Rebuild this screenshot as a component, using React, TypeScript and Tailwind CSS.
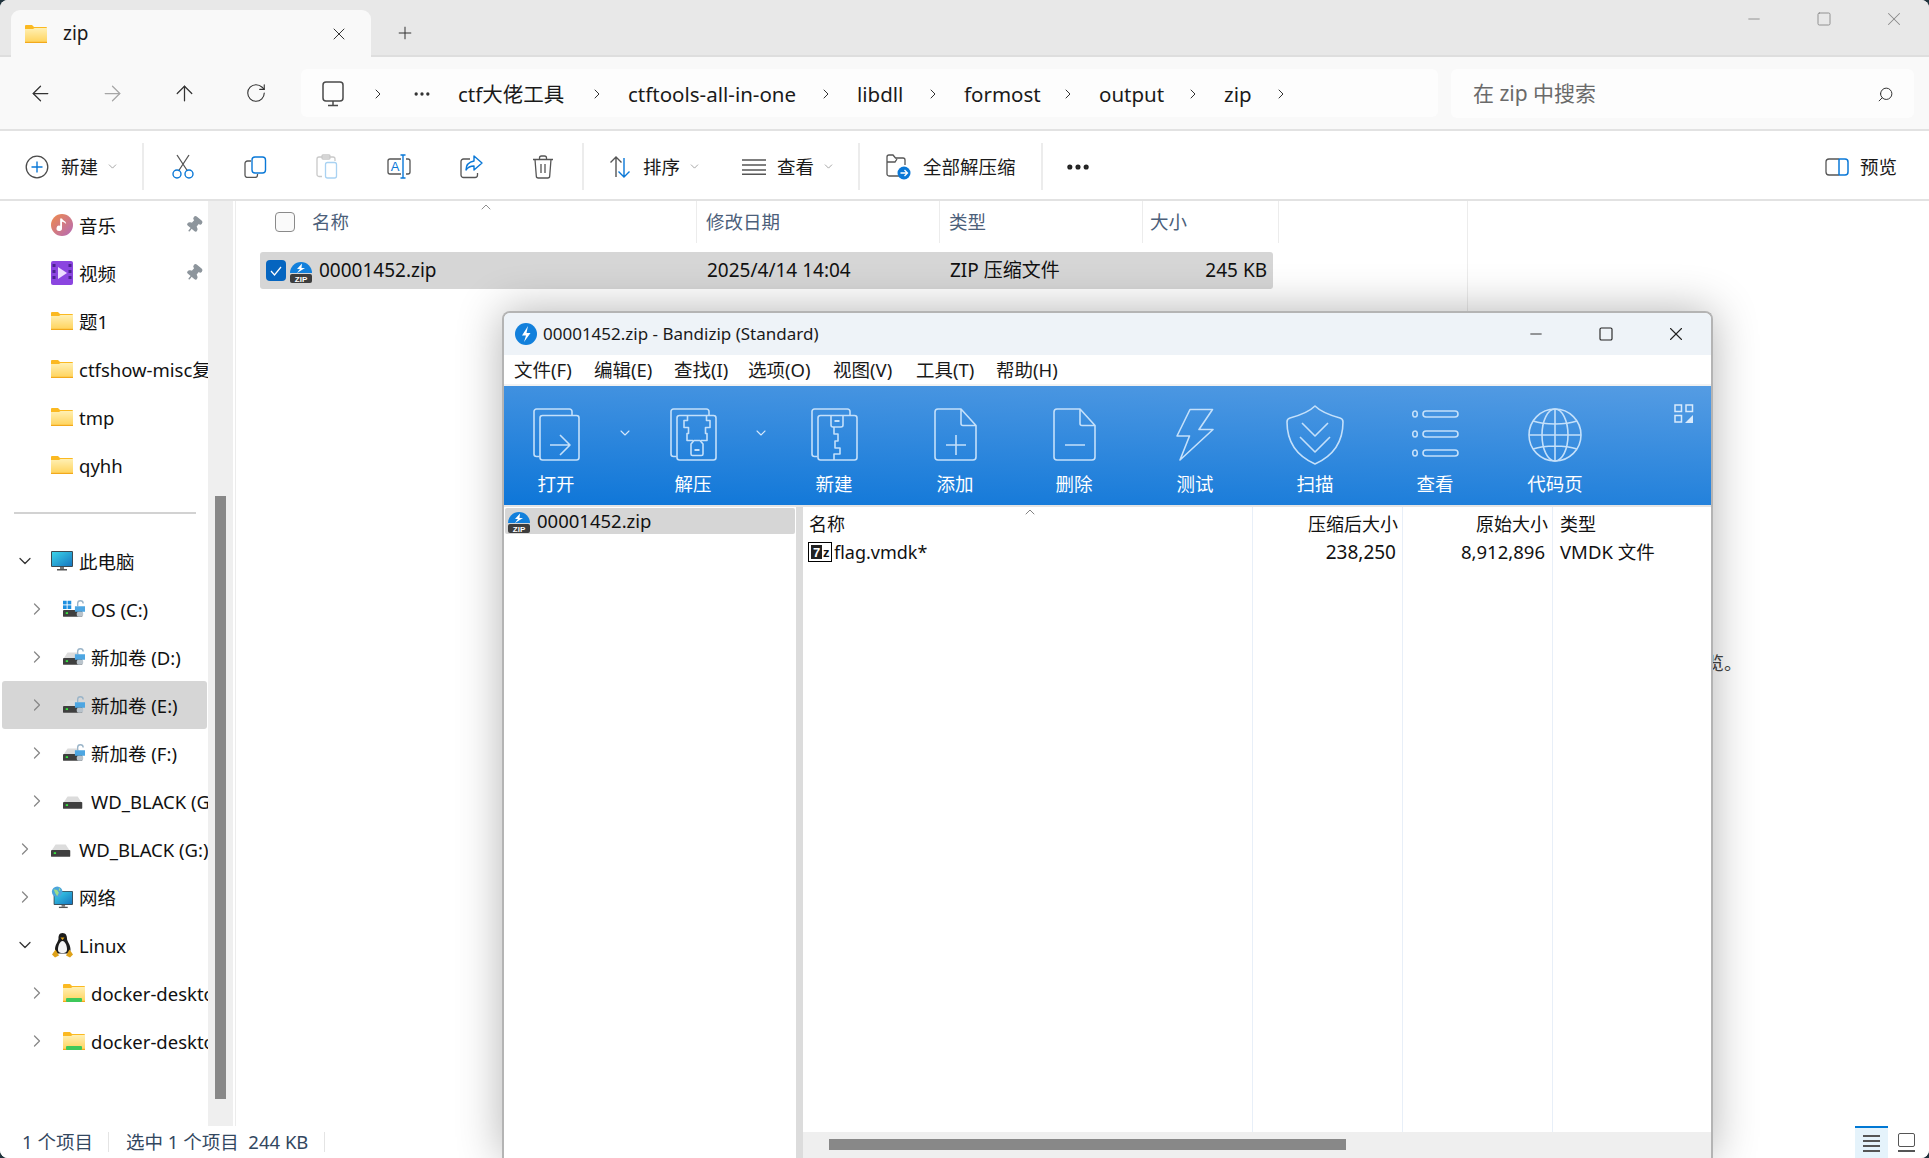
import type { ReactNode } from 'react';
import { ArrowLeft, ArrowRight, ArrowUp, ChevronDown, ChevronRight, ChevronUp, Minus, MoreHorizontal, Pin, Plus, RotateCw, Search, Square, X } from 'lucide-react';
import clsx from 'clsx';

// explorer icons
function FolderIcon({ docker }: { docker?: boolean }) {
  return (
    <svg width="22" height="18" viewBox="0 0 22 18">
      <defs>
        <linearGradient id="folderBody" x1="0" y1="0" x2="0" y2="1">
          <stop offset="0" stopColor="#fff0b4" />
          <stop offset="1" stopColor="#ffd258" />
        </linearGradient>
      </defs>
      <path d="M0 1a1 1 0 0 1 1-1h6l2 2h12a1 1 0 0 1 1 1v3H0z" fill="#fbb921" />
      <path d="M0 4h8l1.500-1H22v14a1 1 0 0 1-1 1H1a1 1 0 0 1-1-1z" fill="url(#folderBody)" />
      <rect x="0" y="16.800" width="22" height="1.200" fill="#f2a91c" />
      {docker && <rect x="3" y="14" width="16" height="4" rx="1" fill="#3ec85a" />}
    </svg>
  );
}

function DriveIcon({ lock, windows }: { lock?: boolean; windows?: boolean }) {
  return (
    <svg width="24" height="20" viewBox="0 0 24 20">
      {windows ? (
        <g fill="#1d8fe0">
          <rect x="0" y="1" width="4" height="4" />
          <rect x="5" y="1" width="4" height="4" />
          <rect x="0" y="6" width="4" height="4" />
          <rect x="5" y="6" width="4" height="4" />
        </g>
      ) : (
        <path d="M1 11l4-6h11l4 6z" fill="#dcdcdc" />
      )}
      <rect x="0" y="11" width="21" height="7.500" rx="1" fill="#3f3f3f" />
      <rect x="3" y="13.500" width="2.500" height="2" fill="#37e33f" />
      {lock && (
        <g>
          <path d="M16 7V4a3 3 0 0 1 6 0" fill="none" stroke="#9ab4c8" strokeWidth="1.500" />
          <rect x="13" y="7" width="11" height="6" fill="#4da6e2" />
          <rect x="15" y="13" width="7" height="5.500" rx="2" fill="#b9c3cb" />
        </g>
      )}
    </svg>
  );
}

function MusicIcon() {
  return (
    <svg width="24" height="24" viewBox="0 0 24 24">
      <defs>
        <linearGradient id="musicFill" x1="0" y1="0" x2="1" y2="1">
          <stop offset="0" stopColor="#f08a4a" />
          <stop offset="1" stopColor="#b46ab8" />
        </linearGradient>
      </defs>
      <circle cx="12" cy="12" r="12" fill="url(#musicFill)" />
      <path d="M12 5v10.500a3 3 0 1 1-2-2.800V5z M12 5c1 2.500 4.500 2.500 4.500 6-1-1.500-3-2-4.500-2.500z" fill="#fff" />
    </svg>
  );
}

function VideoIcon() {
  return (
    <svg width="22" height="24" viewBox="0 0 22 24">
      <rect width="22" height="24" rx="2" fill="#8b45e0" />
      <g fill="#4b2391">
        <rect x="1.500" y="3" width="3" height="3" />
        <rect x="1.500" y="9" width="3" height="3" />
        <rect x="1.500" y="15" width="3" height="3" />
        <rect x="17.500" y="3" width="3" height="3" />
        <rect x="17.500" y="9" width="3" height="3" />
        <rect x="17.500" y="15" width="3" height="3" />
      </g>
      <path d="M7 6l9 6-9 6z" fill="#ecdcff" />
    </svg>
  );
}

function PcIcon() {
  return (
    <svg width="22" height="20" viewBox="0 0 22 20">
      <defs>
        <linearGradient id="pcScreen" x1="0" y1="0" x2="1" y2="1">
          <stop offset="0" stopColor="#3ad4ea" />
          <stop offset="1" stopColor="#1676c0" />
        </linearGradient>
      </defs>
      <rect x="0" y="0" width="22" height="16" rx="1" fill="#3d4a52" />
      <rect x="1" y="1" width="20" height="14" fill="url(#pcScreen)" />
      <rect x="9" y="16" width="4" height="2" fill="#777" />
      <rect x="6" y="18" width="10" height="1.500" fill="#555" />
    </svg>
  );
}

function NetworkIcon() {
  return (
    <svg width="25" height="25" viewBox="0 0 25 25">
      <rect x="3" y="5" width="22" height="16" rx="1" fill="#3d4a52" />
      <rect x="4" y="6" width="20" height="14" fill="url(#pcScreen)" />
      <rect x="12" y="21" width="4" height="2" fill="#777" />
      <rect x="9" y="23" width="10" height="1.500" fill="#555" />
      <circle cx="7" cy="6" r="6" fill="#4aa5dc" />
      <path d="M3 3l4 1 2 3-2 4-2-3zM9 1l2 3-2 1z" fill="#9ddc8a" />
    </svg>
  );
}

function PenguinIcon() {
  return (
    <svg width="21" height="25" viewBox="0 0 21 25">
      <path d="M10.500 0c3.500 0 4.500 3 4.500 5.500 0 3 3.500 6 3.500 11 0 2-1 3-2 4H5c-1-1-2-2-2-4 0-5 3.500-8 3.500-11C6.500 3 7 0 10.500 0z" fill="#1c1c1c" />
      <path d="M10.500 8c2.500 0 4.500 4.500 4.500 8.500 0 2-1 3.500-4.500 3.500S6 18.500 6 16.500c0-4 2-8.500 4.500-8.500z" fill="#f4f4f4" />
      <path d="M8.500 4.500h4L10.500 7z" fill="#e8a917" />
      <path d="M0 21.500l3.500-5 3.500 6-4 2zM21 21.500l-3.500-5-3.500 6 4 2z" fill="#dea21a" />
    </svg>
  );
}

function ZipIcon() {
  return (
    <svg width="24" height="24" viewBox="0 0 24 24">
      <path d="M1 14a11 11 0 0 1 22 0z" fill="#1280dc" />
      <path d="M13 4.500L8 10h3l-3 4 8-5h-3.500z" fill="#fff" />
      <rect x="1" y="15" width="22" height="9" rx="2" fill="#3d3d3d" />
      <text x="12" y="22.500" textAnchor="middle" fontSize="8" fontWeight="700" fill="#fff" fontFamily="Liberation Sans, sans-serif">ZIP</text>
    </svg>
  );
}

// thin toolbar icons
function AddIcon() {
  return (
    <svg width="24" height="24" viewBox="0 0 24 24" fill="none">
      <circle cx="12" cy="12" r="10.800" stroke="#4a4a4a" strokeWidth="1.300" />
      <path d="M12 6.500v11M6.500 12h11" stroke="#0a78d7" strokeWidth="1.400" />
    </svg>
  );
}

function CutIcon() {
  return (
    <svg width="22" height="25" viewBox="0 0 22 25" fill="none">
      <path d="M5 1l10.500 16M17 1L6.500 17" stroke="#555" strokeWidth="1.300" />
      <circle cx="5" cy="20" r="4" stroke="#0a78d7" strokeWidth="1.400" />
      <circle cx="17" cy="20" r="4" stroke="#0a78d7" strokeWidth="1.400" />
    </svg>
  );
}

function CopyIcon() {
  return (
    <svg width="23" height="22" viewBox="0 0 23 22" fill="none">
      <path d="M7 5H3.500A2.500 2.500 0 0 0 1 7.500V19a2.500 2.500 0 0 0 2.500 2.500H11a2.500 2.500 0 0 0 2.500-2.500v-1" stroke="#555" strokeWidth="1.300" />
      <rect x="8" y="1" width="13.500" height="16" rx="3" stroke="#0a78d7" strokeWidth="1.400" />
    </svg>
  );
}

function PasteIcon() {
  return (
    <svg width="22" height="25" viewBox="0 0 22 25" fill="none">
      <path d="M6 22.500H3a2 2 0 0 1-2-2V5a2 2 0 0 1 2-2h14a2 2 0 0 1 2 2v2" stroke="#c9c9c9" strokeWidth="1.300" />
      <rect x="6" y="1" width="8" height="4" rx="1" stroke="#c9c9c9" strokeWidth="1.300" />
      <rect x="9.500" y="8.500" width="11" height="15.500" rx="2" stroke="#a9d2f2" strokeWidth="1.300" />
    </svg>
  );
}

function RenameIcon() {
  return (
    <svg width="24" height="25" viewBox="0 0 24 25" fill="none">
      <path d="M14 5H3a2 2 0 0 0-2 2v11a2 2 0 0 0 2 2h11M19 5h2a2 2 0 0 1 2 2v11a2 2 0 0 1-2 2h-2" stroke="#555" strokeWidth="1.300" />
      <path d="M13.500 1h5M16 1v23M13.500 24h5" stroke="#0a78d7" strokeWidth="1.400" />
      <text x="8" y="17" textAnchor="middle" fontSize="13" fill="#0a78d7" fontFamily="Liberation Sans, sans-serif">A</text>
    </svg>
  );
}

function ShareIcon() {
  return (
    <svg width="23" height="24" viewBox="0 0 23 24" fill="none">
      <path d="M10 4H3.500A2.500 2.500 0 0 0 1 6.500V20a2.500 2.500 0 0 0 2.500 2.500H15a2.500 2.500 0 0 0 2.500-2.500v-2" stroke="#555" strokeWidth="1.300" />
      <path d="M14 1l8 7-8 7v-4c-4 0-6 1-8 4 0-5 3-8 8-9z" stroke="#0a78d7" strokeWidth="1.400" strokeLinejoin="round" />
    </svg>
  );
}

function TrashIcon() {
  return (
    <svg width="22" height="24" viewBox="0 0 22 24" fill="none" stroke="#555" strokeWidth="1.300">
      <path d="M1 4.500h20M7.500 4.500V3a2 2 0 0 1 2-2h3a2 2 0 0 1 2 2v1.500" />
      <path d="M3 4.500l1.300 16.500a2 2 0 0 0 2 2h9.400a2 2 0 0 0 2-2L19 4.500" />
      <path d="M9 9v9M13 9v9" />
    </svg>
  );
}

function ExtractIcon() {
  return (
    <svg width="25" height="26" viewBox="0 0 25 26" fill="none">
      <path d="M13 22H3a2 2 0 0 1-2-2V3a2 2 0 0 1 2-2h4l2.500 3H17a2 2 0 0 1 2 2v5M1 8h8l2-3" stroke="#555" strokeWidth="1.300" />
      <circle cx="18" cy="19" r="6.500" fill="#0a78d7" />
      <path d="M14.500 19h7M18.500 16l3 3-3 3" stroke="#fff" strokeWidth="1.300" />
    </svg>
  );
}

function MonitorIcon() {
  return (
    <svg width="22" height="26" viewBox="0 0 22 26" fill="none" stroke="#4a4a4a" strokeWidth="1.500">
      <rect x="1" y="1" width="20" height="19" rx="3" />
      <path d="M11 20v4M6 24.500h10" />
    </svg>
  );
}

function PreviewIcon() {
  return (
    <svg width="24" height="18" viewBox="0 0 24 18" fill="none">
      <path d="M14 1H4a3 3 0 0 0-3 3v10a3 3 0 0 0 3 3h10" stroke="#555" strokeWidth="1.300" />
      <path d="M14 1v16M14 1h6a3 3 0 0 1 3 3v10a3 3 0 0 1-3 3h-6" stroke="#0a78d7" strokeWidth="1.500" />
    </svg>
  );
}

function SortIcon() {
  return (
    <svg width="24" height="24" viewBox="0 0 24 24" fill="none" strokeWidth="1.400">
      <path d="M8 22V2M2.500 7.500L8 2l5.500 5.500" stroke="#555" />
      <path d="M16 3v19M10.500 16.500L16 22l5.500-5.500" stroke="#0a78d7" />
    </svg>
  );
}

// bandizip ribbon icons
const ribbonStroke = { fill: 'none', stroke: '#c4e0fa', strokeWidth: 1.600, strokeLinejoin: 'round' as const };

function BackSheet() {
  return <path d="M6.500 48.500H3.500a2.500 2.500 0 0 1-2.500-2.500V3.500A2.500 2.500 0 0 1 3.500 1h33A2.500 2.500 0 0 1 39 3.500V7" {...ribbonStroke} />;
}

function OpenRibbonIcon() {
  return (
    <svg width="47" height="53" viewBox="0 0 47 53">
      <BackSheet />
      <rect x="7" y="7.500" width="39" height="44.500" rx="2.500" {...ribbonStroke} />
      <path d="M17 37h19M27 27l10 10-10 10" {...ribbonStroke} />
    </svg>
  );
}

function ExtractRibbonIcon() {
  return (
    <svg width="47" height="53" viewBox="0 0 47 53">
      <BackSheet />
      <rect x="7" y="7.500" width="39" height="44.500" rx="2.500" {...ribbonStroke} />
      <path d="M17.500 7.500v5H14v7h4.500v6H17v7h6M36.500 7.500v5H40v7h-4.500v6H37v7h-6" {...ribbonStroke} />
      <path d="M21 36v10a1.500 1.500 0 0 0 1.500 1.500h9A1.500 1.500 0 0 0 33 46V36l-3-3.500h-6z" {...ribbonStroke} />
      <rect x="24.500" y="41" width="5" height="2" fill="#c4e0fa" />
    </svg>
  );
}

function NewRibbonIcon() {
  return (
    <svg width="47" height="53" viewBox="0 0 47 53">
      <BackSheet />
      <rect x="7" y="7.500" width="39" height="44.500" rx="2.500" {...ribbonStroke} />
      <path d="M20 7.500V17a2 2 0 0 0 2 2h8a2 2 0 0 0 2-2V7.500" {...ribbonStroke} />
      <rect x="23.500" y="12" width="5" height="2" fill="#c4e0fa" />
      <path d="M23 19v7h4v7h-3v7h5v6h-6v6" {...ribbonStroke} />
    </svg>
  );
}

function PageRibbonIcon({ children }: { children: ReactNode }) {
  return (
    <svg width="43" height="53" viewBox="0 0 43 53">
      <path d="M27 1H4a3 3 0 0 0-3 3v45a3 3 0 0 0 3 3h35a3 3 0 0 0 3-3V17.500zM27 1v14.500a2 2 0 0 0 2 2h13" {...ribbonStroke} />
      {children}
    </svg>
  );
}

function BoltRibbonIcon() {
  return (
    <svg width="38" height="53" viewBox="0 0 38 53">
      <path d="M14 1.500h22.500L23 21.500h14L4 52l9.500-24H1z" {...ribbonStroke} />
    </svg>
  );
}

function ShieldRibbonIcon() {
  return (
    <svg width="58" height="60" viewBox="0 0 58 60">
      <path d="M29 1c4 4 14 9 25 12 2 .5 3 2 3 4 0 20-10 34-28 42C11 51 1 37 1 17c0-2 1-3.500 3-4C15 10 25 5 29 1z" {...ribbonStroke} />
      <path d="M16 18l13 13 13-13M14 32l15 15 15-15" {...ribbonStroke} />
    </svg>
  );
}

function ListRibbonIcon() {
  return (
    <svg width="47" height="53" viewBox="0 0 47 53">
      <ellipse cx="3" cy="6" rx="2.300" ry="3" {...ribbonStroke} />
      <rect x="11" y="3" width="35" height="6" rx="3" {...ribbonStroke} />
      <ellipse cx="3" cy="26" rx="2.300" ry="3" {...ribbonStroke} />
      <rect x="11" y="23" width="35" height="6" rx="3" {...ribbonStroke} />
      <ellipse cx="3" cy="45" rx="2.300" ry="3" {...ribbonStroke} />
      <rect x="11" y="42" width="35" height="6" rx="3" {...ribbonStroke} />
    </svg>
  );
}

function GlobeRibbonIcon() {
  return (
    <svg width="54" height="54" viewBox="0 0 54 54">
      <ellipse cx="27" cy="27" rx="26" ry="26" {...ribbonStroke} />
      <ellipse cx="27" cy="27" rx="13" ry="26" {...ribbonStroke} />
      <path d="M27 1v52M1 27h52M5 13c12 4 32 4 44 0M5 41c12-4 32-4 44 0" {...ribbonStroke} />
    </svg>
  );
}

function RibbonButton({ label, icon, className }: { label: string; icon: ReactNode; className: string }) {
  return (
    <div className={clsx('flex shrink-0 flex-col items-center pt-[22px]', className)}>
      <div className="flex h-[53px] items-center">{icon}</div>
      <span className="mt-[11px] text-[18.5px] leading-[24px] text-white">{label}</span>
    </div>
  );
}

function RibbonDrop() {
  return (
    <div className="flex w-[34px] shrink-0 justify-center pt-[39px]">
      <ChevronDown size={16} strokeWidth={1.600} className="text-[#d5e8fb]" />
    </div>
  );
}

function BandizipWindow() {
  const menus = [
    { label: '文件(F)', width: 'w-[80px]' },
    { label: '编辑(E)', width: 'w-[80px]' },
    { label: '查找(I)', width: 'w-[74px]' },
    { label: '选项(O)', width: 'w-[85px]' },
    { label: '视图(V)', width: 'w-[83px]' },
    { label: '工具(T)', width: 'w-[80px]' },
    { label: '帮助(H)', width: 'w-[80px]' },
  ];

  return (
    <div className="absolute left-[502px] top-[311px] flex h-[847px] w-[1211px] flex-col overflow-hidden rounded-t-[8px] border-2 border-b-0 border-[#b4b4b4] bg-white shadow-[0_0_45px_rgba(0,0,0,0.3)]">
      {/* title */}
      <div className="flex h-[42px] shrink-0 items-center bg-[#eef3f8] pl-[11px]">
        <svg width="22" height="22" viewBox="0 0 22 22">
          <circle cx="11" cy="11" r="11" fill="#1280dc" />
          <path d="M13 3L7 12.500h4L9 19l6.500-9H11.500z" fill="#fff" />
        </svg>
        <span className="ml-[6px] whitespace-nowrap text-[17px] text-[#1a1a1a]">00001452.zip - Bandizip (Standard)</span>
        <div className="ml-auto flex items-center text-[#222]">
          <div className="flex w-[70px] justify-center"><Minus size={18} strokeWidth={1.200} /></div>
          <div className="flex w-[70px] justify-center"><Square size={16} strokeWidth={1.700} /></div>
          <div className="flex w-[70px] justify-center"><X size={22} strokeWidth={1.200} /></div>
        </div>
      </div>

      {/* menu */}
      <div className="flex h-[29px] shrink-0 items-center pl-[10px]">
        {menus.map((m) => (
          <span key={m.label} className={clsx('whitespace-nowrap text-[18.5px] text-[#1a1a1a]', m.width)}>{m.label}</span>
        ))}
      </div>
      <div className="h-[2px] shrink-0 bg-[#f2f2f2]" />

      {/* ribbon */}
      <div className="flex h-[119px] shrink-0 bg-[linear-gradient(182.4deg,#559ce3,#0e76d8)]">
        <RibbonButton label="打开" className="w-[104px]" icon={<OpenRibbonIcon />} />
        <RibbonDrop />
        <RibbonButton label="解压" className="w-[102px]" icon={<ExtractRibbonIcon />} />
        <RibbonDrop />
        <RibbonButton label="新建" className="w-[112px]" icon={<NewRibbonIcon />} />
        <RibbonButton
          label="添加"
          className="w-[130px]"
          icon={<PageRibbonIcon><path d="M22 27v20M12 37h20" {...ribbonStroke} /></PageRibbonIcon>}
        />
        <RibbonButton
          label="删除"
          className="w-[108px]"
          icon={<PageRibbonIcon><path d="M12 37h20" {...ribbonStroke} /></PageRibbonIcon>}
        />
        <RibbonButton label="测试" className="w-[134px]" icon={<BoltRibbonIcon />} />
        <RibbonButton label="扫描" className="w-[106px]" icon={<ShieldRibbonIcon />} />
        <RibbonButton label="查看" className="w-[134px]" icon={<ListRibbonIcon />} />
        <RibbonButton label="代码页" className="w-[106px]" icon={<GlobeRibbonIcon />} />
        <div className="ml-[66px] pt-[18px]">
          <svg width="20" height="19" viewBox="0 0 20 19" fill="none" stroke="#d8eafc" strokeWidth="1.500">
            <rect x="1" y="1" width="6.500" height="6.500" />
            <rect x="12" y="1" width="6.500" height="6.500" />
            <rect x="1" y="11.500" width="6.500" height="6.500" />
            <path d="M19 11v8h-8z" fill="#d8eafc" stroke="none" />
          </svg>
        </div>
      </div>
      <div className="h-[2px] shrink-0 bg-[#e4e4e4]" />

      {/* panes */}
      <div className="flex min-h-0 flex-1">
        <div className="w-[292px] shrink-0 pl-[1px] pr-[1px] pt-[1px]">
          <div className="flex h-[26px] items-center rounded-[2px] bg-[#d6d6d6] pl-[2px]">
            <ZipIcon />
            <span className="ml-[6px] text-[18.5px] text-[#111]">00001452.zip</span>
          </div>
        </div>
        <div className="w-[7px] shrink-0 bg-[#dcdcdc]" />
        <div className="flex min-w-0 flex-1 flex-col">
          <div className="flex min-h-0 flex-1 text-[18px] leading-[22px] text-[#111]">
            <div className="relative w-[450px] shrink-0 border-r border-[#e8eff8] pl-[5px]">
              <ChevronUp size={16} strokeWidth={1.100} className="absolute left-[219px] top-[-3px] text-[#555]" />
              <div className="flex h-[34px] items-center pl-[1px]">名称</div>
              <div className="flex h-[22px] items-center">
                <span className="flex h-[20px] w-[24px] items-center border border-black bg-white pl-[2px] font-['Liberation_Sans',sans-serif] text-[13px] font-bold leading-none">
                  <span className="flex h-[14px] w-[11px] items-center justify-center bg-[#222] text-white">7</span>
                  <span className="ml-[1px]">z</span>
                </span>
                <span className="ml-[2px] text-[18px]">flag.vmdk*</span>
              </div>
            </div>
            <div className="w-[150px] shrink-0 border-r border-[#e8eff8] pr-[4px] text-right">
              <div className="flex h-[34px] items-center justify-end">压缩后大小</div>
              <div className="flex h-[22px] items-center justify-end pr-[2px] text-[19px]">238,250</div>
            </div>
            <div className="w-[150px] shrink-0 border-r border-[#e8eff8] pr-[4px] text-right">
              <div className="flex h-[34px] items-center justify-end">原始大小</div>
              <div className="flex h-[22px] items-center justify-end pr-[3px] text-[18.5px]">8,912,896</div>
            </div>
            <div className="flex-1 pl-[7px]">
              <div className="flex h-[34px] items-center">类型</div>
              <div className="flex h-[22px] items-center text-[18.5px]">VMDK 文件</div>
            </div>
          </div>
          <div className="h-[26px] shrink-0 bg-[#efefef] pl-[26px] pt-[7px]">
            <div className="h-[11px] w-[517px] bg-[#888]" />
          </div>
        </div>
      </div>
    </div>
  );
}

// explorer tree
function TreeRow({ level = 1, open, pinned, selected, icon, label }: {
  level?: 1 | 2;
  open?: boolean;
  pinned?: boolean;
  selected?: boolean;
  icon: ReactNode;
  label: string;
}) {
  return (
    <div
      className={clsx(
        'flex h-12 items-center overflow-hidden',
        selected ? 'ml-[2px] w-[205px] rounded-[3px] bg-[#d6d6d6] pl-[25px]' : 'w-[208px]',
        !selected && (level === 2 ? 'pl-[27px]' : 'pl-[15px]'),
      )}
    >
      <div className="flex w-[20px] shrink-0 justify-center">
        {open === undefined ? null : open ? (
          <ChevronDown size={20} strokeWidth={1.500} className="text-[#333]" />
        ) : (
          <ChevronRight size={20} strokeWidth={1.500} className="text-[#888]" />
        )}
      </div>
      <div className="ml-[16px] flex w-[22px] shrink-0 items-center justify-center">{icon}</div>
      <span className="ml-[6px] whitespace-nowrap pt-[1px] text-[18.5px] text-[#111]">{label}</span>
      {pinned && <Pin size={18} fill="currentColor" className="ml-auto mr-[5px] shrink-0 rotate-[40deg] text-[#8d959c]" />}
    </div>
  );
}

function Crumb({ text, className }: { text: string; className: string }) {
  return <span className={clsx('whitespace-nowrap text-[20.5px] text-[#1a1a1a]', className)}>{text}</span>;
}

function CrumbChevron() {
  return (
    <div className="flex w-[16px] shrink-0 justify-center">
      <ChevronRight size={20} strokeWidth={1.400} className="text-[#222]" />
    </div>
  );
}

function ToolChevron({ className }: { className: string }) {
  return <ChevronDown size={13} strokeWidth={1.200} className={clsx('text-[#777]', className)} />;
}

function IconButton({ children }: { children: ReactNode }) {
  return <div className="flex w-[72px] shrink-0 items-center justify-center">{children}</div>;
}

function ToolDivider({ className }: { className: string }) {
  return <div className={clsx('h-[47px] w-[2px] shrink-0 bg-[#ececec]', className)} />;
}

export default function App() {
  return (
    <div className="h-[1158px] w-[1929px] overflow-hidden bg-[#20333d] font-['Noto_Sans','Noto_Sans_CJK_SC',sans-serif]">
      <div className="relative flex h-full w-full flex-col overflow-hidden rounded-[8px] bg-white">
        {/* tabs */}
        <div className="flex h-[57px] shrink-0 items-start border-b-2 border-[#dedede] bg-[#e8e8e8] pl-[11px]">
          <div className="mt-[10px] flex h-[47px] w-[360px] shrink-0 items-center rounded-t-[9px] bg-[#f9f9f9] pl-[14px]">
            <FolderIcon />
            <span className="ml-[16px] text-[19px] text-[#1a1a1a]">zip</span>
            <X size={20} strokeWidth={1.200} className="ml-auto mr-[22px] text-[#333]" />
          </div>
          <Plus size={20} strokeWidth={1.200} className="ml-[24px] mt-[23px] text-[#333]" />
          <div className="ml-auto flex h-[38px] items-center text-[#8a8a8a]">
            <div className="flex w-[70px] justify-center"><Minus size={18} strokeWidth={1.200} /></div>
            <div className="flex w-[70px] justify-center"><Square size={16} strokeWidth={1.400} /></div>
            <div className="flex w-[70px] justify-center"><X size={22} strokeWidth={1.100} /></div>
          </div>
        </div>

        {/* address */}
        <div className="flex h-[74px] shrink-0 items-center border-b-2 border-[#e2e2e2] bg-[#f9f9f9] pl-[4px]">
          <IconButton><ArrowLeft size={25} strokeWidth={1.200} className="text-[#333]" /></IconButton>
          <IconButton><ArrowRight size={25} strokeWidth={1.200} className="text-[#a6a6a6]" /></IconButton>
          <IconButton><ArrowUp size={25} strokeWidth={1.200} className="text-[#333]" /></IconButton>
          <IconButton><RotateCw size={22} strokeWidth={1.200} className="text-[#333]" /></IconButton>
          <div className="ml-[9px] flex h-[48px] w-[1137px] shrink-0 items-center gap-[23px] rounded-[6px] bg-[#fdfdfd] pl-[21px] pt-[2px]">
            <div className="mr-[3px]"><MonitorIcon /></div>
            <CrumbChevron />
            <div className="flex w-[26px] justify-center"><MoreHorizontal size={20} strokeWidth={2} className="text-[#333]" /></div>
            <Crumb text="ctf大佬工具" className="w-[108px]" />
            <CrumbChevron />
            <Crumb text="ctftools-all-in-one" className="w-[167px]" />
            <CrumbChevron />
            <Crumb text="libdll" className="w-[45px]" />
            <CrumbChevron />
            <Crumb text="formost" className="w-[73px]" />
            <CrumbChevron />
            <Crumb text="output" className="w-[63px]" />
            <CrumbChevron />
            <Crumb text="zip" className="w-[26px]" />
            <CrumbChevron />
          </div>
          <div className="ml-[13px] flex h-[49px] w-[463px] shrink-0 items-center justify-between rounded-[6px] bg-[#fdfdfd] pl-[22px] pr-[20px] pt-[2px]">
            <span className="text-[21px] text-[#6a6a6a]">在 zip 中搜索</span>
            <Search size={17} strokeWidth={1.400} className="scale-x-[-1] text-[#333]" />
          </div>
        </div>

        {/* commands */}
        <div className="flex h-[70px] shrink-0 items-center border-b-2 border-[#e2e2e2] bg-white pt-[3px] text-[18.5px] text-[#1a1a1a]">
          <div className="ml-[25px]"><AddIcon /></div>
          <span className="ml-[12px] w-[37px] whitespace-nowrap">新建</span>
          <ToolChevron className="ml-[8px]" />
          <ToolDivider className="ml-[23px] mr-[3px]" />
          <IconButton><CutIcon /></IconButton>
          <IconButton><CopyIcon /></IconButton>
          <IconButton><PasteIcon /></IconButton>
          <IconButton><RenameIcon /></IconButton>
          <IconButton><ShareIcon /></IconButton>
          <IconButton><TrashIcon /></IconButton>
          <ToolDivider className="ml-[3px]" />
          <div className="ml-[24px]"><SortIcon /></div>
          <span className="ml-[11px] w-[37px] whitespace-nowrap">排序</span>
          <ToolChevron className="ml-[8px]" />
          <svg width="24" height="16" viewBox="0 0 24 16" className="ml-[41px]" fill="none" stroke="#555" strokeWidth="1.400">
            <path d="M0 1h24M0 6h24M0 11h24M0 15.300h24" />
          </svg>
          <span className="ml-[11px] w-[37px] whitespace-nowrap">查看</span>
          <ToolChevron className="ml-[8px]" />
          <ToolDivider className="ml-[23px]" />
          <div className="ml-[26px]"><ExtractIcon /></div>
          <span className="ml-[12px] w-[90px] whitespace-nowrap">全部解压缩</span>
          <ToolDivider className="ml-[28px]" />
          <MoreHorizontal size={28} strokeWidth={2.400} className="ml-[21px] text-[#222]" />
          <div className="ml-auto"><PreviewIcon /></div>
          <span className="ml-[11px] mr-[32px] w-[37px] whitespace-nowrap">预览</span>
        </div>

        {/* body */}
        <div className="flex min-h-0 flex-1">
          <div className="w-[208px] shrink-0 overflow-hidden">
            <TreeRow pinned icon={<MusicIcon />} label="音乐" />
            <TreeRow pinned icon={<VideoIcon />} label="视频" />
            <TreeRow icon={<FolderIcon />} label="题1" />
            <TreeRow icon={<FolderIcon />} label="ctfshow-misc复现" />
            <TreeRow icon={<FolderIcon />} label="tmp" />
            <TreeRow icon={<FolderIcon />} label="qyhh" />
            <div className="flex h-12 items-center pl-[14px]">
              <div className="h-[2px] w-[182px] bg-[#d2d2d2]" />
            </div>
            <TreeRow open icon={<PcIcon />} label="此电脑" />
            <TreeRow level={2} open={false} icon={<DriveIcon lock windows />} label="OS (C:)" />
            <TreeRow level={2} open={false} icon={<DriveIcon lock />} label="新加卷 (D:)" />
            <TreeRow level={2} open={false} selected icon={<DriveIcon lock />} label="新加卷 (E:)" />
            <TreeRow level={2} open={false} icon={<DriveIcon lock />} label="新加卷 (F:)" />
            <TreeRow level={2} open={false} icon={<DriveIcon />} label="WD_BLACK (G:)" />
            <TreeRow open={false} icon={<DriveIcon />} label="WD_BLACK (G:)" />
            <TreeRow open={false} icon={<NetworkIcon />} label="网络" />
            <TreeRow open icon={<PenguinIcon />} label="Linux" />
            <TreeRow level={2} open={false} icon={<FolderIcon docker />} label="docker-desktop" />
            <TreeRow level={2} open={false} icon={<FolderIcon docker />} label="docker-desktop-data" />
          </div>
          <div className="w-[25px] shrink-0 bg-[#efefef] pl-[7px] pt-[295px]">
            <div className="h-[603px] w-[11px] bg-[#888]" />
          </div>
          <div className="w-[3px] shrink-0 border-r border-[#ececec]" />

          <div className="min-w-0 flex-1">
            <div className="relative flex h-[42px] text-[18.5px] text-[#4c607a]">
              <ChevronUp size={16} strokeWidth={1.100} className="absolute left-[242px] top-[-2px] text-[#666]" />
              <div className="flex w-[461px] shrink-0 items-center border-r border-[#ececec] pl-[39px]">
                <span className="h-[20px] w-[20px] rounded-[4px] border border-[#8a8a8a] bg-[#fafafa]" />
                <span className="ml-[17px]">名称</span>
              </div>
              <div className="flex w-[243px] shrink-0 items-center border-r border-[#ececec] pl-[9px]">修改日期</div>
              <div className="flex w-[203px] shrink-0 items-center border-r border-[#ececec] pl-[9px]">类型</div>
              <div className="flex w-[136px] shrink-0 items-center border-r border-[#ececec] pl-[7px]">大小</div>
            </div>
            <div className="ml-[24px] mt-[9px] flex h-[37px] w-[1013px] items-center rounded-[3px] bg-[#d6d6d6] pl-[6px] text-[19px] text-[#111]">
              <span className="flex h-[21px] w-[20px] items-center justify-center rounded-[4px] bg-[#0565c0]">
                <svg width="12" height="10" viewBox="0 0 12 10" fill="none" stroke="#fff" strokeWidth="1.200"><path d="M1 5l3.500 4L11 1" /></svg>
              </span>
              <div className="ml-[3px]"><ZipIcon /></div>
              <span className="ml-[6px] w-[388px]">00001452.zip</span>
              <span className="w-[243px]">2025/4/14 14:04</span>
              <span className="w-[190px]">ZIP 压缩文件</span>
              <span className="w-[127px] text-right">245 KB</span>
            </div>
          </div>

          <div className="flex w-[462px] shrink-0 items-center justify-end border-l border-[#ececec] pr-[187px]">
            <span className="text-[18px] text-[#444]">选择文件进行预览。</span>
          </div>
        </div>

        {/* status */}
        <div className="flex h-[32px] shrink-0 items-center bg-white text-[18.5px] text-[#33475f]">
          <span className="ml-[22px] w-[68px] whitespace-nowrap">1 个项目</span>
          <div className="ml-[18px] h-[20px] w-[1px] bg-[#e4e4e4]" />
          <span className="ml-[17px] w-[180px] whitespace-nowrap">选中 1 个项目&nbsp;&nbsp;244 KB</span>
          <div className="ml-[18px] h-[20px] w-[1px] bg-[#e4e4e4]" />
          <div className="ml-auto flex h-full w-[33px] flex-col items-center justify-center gap-[3px] border-t-2 border-[#0078d4] bg-[#e5f3fb]">
            <div className="h-[2px] w-[17px] bg-[#555]" />
            <div className="h-[2px] w-[17px] bg-[#555]" />
            <div className="h-[2px] w-[17px] bg-[#555]" />
            <div className="h-[2px] w-[17px] bg-[#555]" />
          </div>
          <div className="ml-[10px] mr-[14px] flex flex-col gap-[3px]">
            <div className="h-[14px] w-[17px] rounded-[2px] border border-[#555]" />
            <div className="h-[2px] w-[17px] bg-[#555]" />
          </div>
        </div>

        <BandizipWindow />
      </div>
    </div>
  );
}
